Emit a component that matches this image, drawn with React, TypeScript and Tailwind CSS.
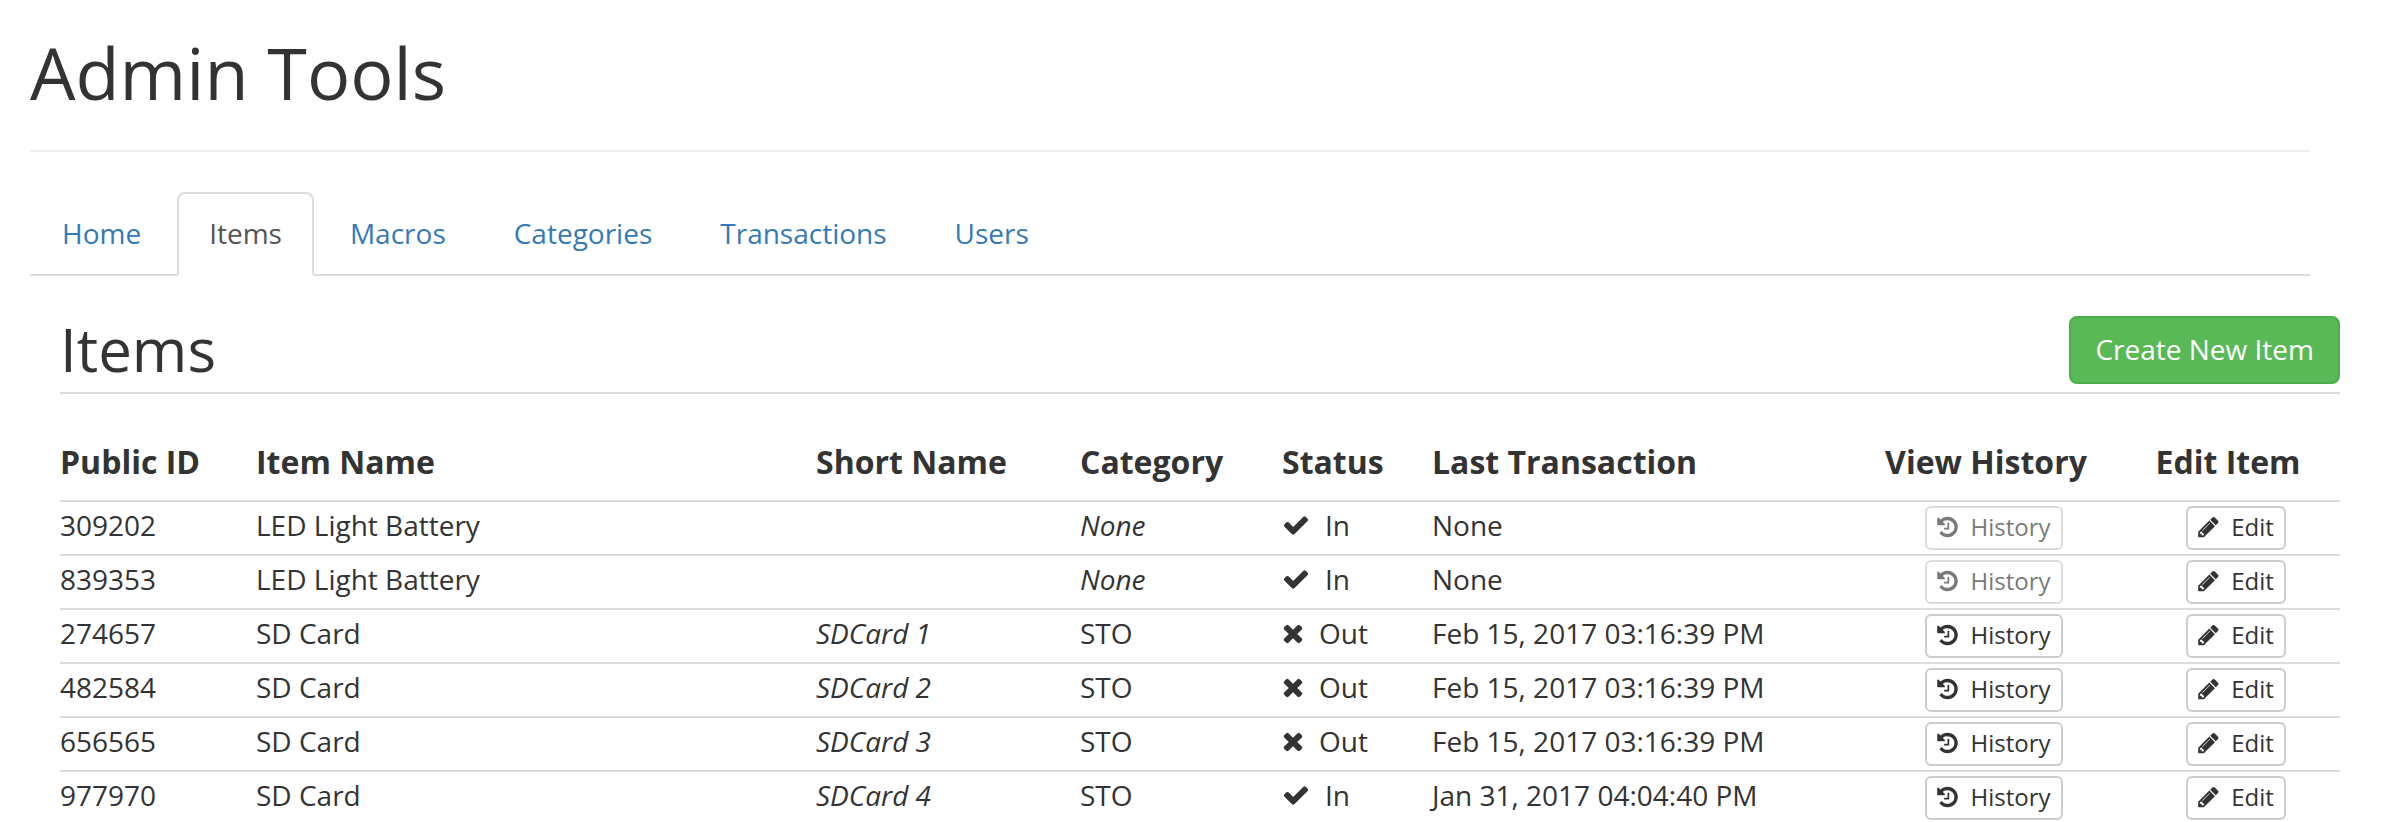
import type { ReactNode } from "react";

type Item = {
  id: string;
  name: string;
  shortName: string;
  category: string | null;
  status: "In" | "Out";
  lastTransaction: string | null;
};

const tabs = ["Home", "Items", "Macros", "Categories", "Transactions", "Users"];
const activeTab = "Items";

const items: Item[] = [
  { id: "309202", name: "LED Light Battery", shortName: "", category: null, status: "In", lastTransaction: null },
  { id: "839353", name: "LED Light Battery", shortName: "", category: null, status: "In", lastTransaction: null },
  { id: "274657", name: "SD Card", shortName: "SDCard 1", category: "STO", status: "Out", lastTransaction: "Feb 15, 2017 03:16:39 PM" },
  { id: "482584", name: "SD Card", shortName: "SDCard 2", category: "STO", status: "Out", lastTransaction: "Feb 15, 2017 03:16:39 PM" },
  { id: "656565", name: "SD Card", shortName: "SDCard 3", category: "STO", status: "Out", lastTransaction: "Feb 15, 2017 03:16:39 PM" },
  { id: "977970", name: "SD Card", shortName: "SDCard 4", category: "STO", status: "In", lastTransaction: "Jan 31, 2017 04:04:40 PM" },
];

function CheckIcon() {
  return (
    <svg viewBox="0 0 1792 1792" className="h-7 w-7 shrink-0" fill="currentColor" aria-hidden="true">
      <path d="M1671 566q0 40-28 68l-724 724-136 136q-28 28-68 28t-68-28l-136-136-362-362q-28-28-28-68t28-68l136-136q28-28 68-28t68 28l294 295 656-657q28-28 68-28t68 28l136 136q28 28 28 68z" />
    </svg>
  );
}

function TimesIcon() {
  return (
    <svg viewBox="192 0 1408 1792" className="h-7 w-[22px] shrink-0" fill="currentColor" aria-hidden="true">
      <path d="M1490 1322q0 40-28 68l-136 136q-28 28-68 28t-68-28l-294-294-294 294q-28 28-68 28t-68-28l-136-136q-28-28-28-68t28-68l294-294-294-294q-28-28-28-68t28-68l136-136q28-28 68-28t68 28l294 294 294-294q28-28 68-28t68 28l136 136q28 28 28 68t-28 68l-294 294 294 294q28 28 28 68z" />
    </svg>
  );
}

function HistoryIcon() {
  return (
    <svg viewBox="128 0 1536 1792" className="h-6 w-[21px] shrink-0" fill="currentColor" aria-hidden="true">
      <path d="M1664 896q0 156-61 298t-164 245-245 164-298 61q-172 0-327-72.5t-264-204.5q-7-10-6.5-22.5t8.5-20.5l137-138q10-9 25-9 16 2 23 12 73 95 179 147t225 52q104 0 198.5-40.5t163.5-109.5 109.5-163.5 40.5-198.5-40.5-198.5-109.5-163.5-163.5-109.5-198.5-40.5q-98 0-188 35.5t-160 101.5l137 138q31 30 14 69-17 40-59 40h-448q-26 0-45-19t-19-45v-448q0-42 40-59 39-17 69 14l130 129q107-101 244.5-156.5t284.5-55.5q156 0 298 61t245 164 164 245 61 298zm-640-288v448q0 14-9 23t-23 9h-320q-14 0-23-9t-9-23v-64q0-14 9-23t23-9h224v-352q0-14 9-23t23-9h64q14 0 23 9t9 23z" />
    </svg>
  );
}

function PencilIcon() {
  return (
    <svg viewBox="128 0 1536 1792" className="h-6 w-[21px] shrink-0" fill="currentColor" aria-hidden="true">
      <path d="M491 1536l91-91-235-235-91 91v107h128v128h107zm523-928q0-22-22-22-10 0-17 7l-542 542q-7 7-7 17 0 22 22 22 10 0 17-7l542-542q7-7 7-17zm-54-192l416 416-832 832h-416v-416zm683 96q0 53-37 90l-166 166-416-416 166-165q36-38 90-38 53 0 91 38l235 234q37 39 37 91z" />
    </svg>
  );
}

function SmallButton({ icon, label, disabled }: { icon: ReactNode; label: string; disabled?: boolean }) {
  return (
    <button
      type="button"
      disabled={disabled}
      className="inline-flex h-11 items-center gap-3 rounded-md border-2 border-[#ccc] bg-white px-[10px] pb-[2px] align-top text-2xl leading-[34px] text-[#333] disabled:opacity-65"
    >
      {icon}
      {label}
    </button>
  );
}

export default function App() {
  return (
    <div className="bg-white font-['Open_Sans',sans-serif] text-[28px] leading-[38px] text-[#333]">
      <header className="pr-[82px] pl-[30px] pt-8">
        <h1 className="border-b-2 border-[#eee] pb-[38px] text-7xl leading-[80px]">Admin Tools</h1>
        <nav className="mt-10 border-b-2 border-[#ddd]">
          <ul className="-mb-[2px] flex gap-1">
            {tabs.map((tab) => (
              <li key={tab}>
                <a
                  href={`#${tab.toLowerCase()}`}
                  aria-current={tab === activeTab ? "page" : undefined}
                  className={
                    tab === activeTab
                      ? "block rounded-t-lg border-2 border-[#ddd] border-b-white bg-white px-[30px] pt-5 pb-[22px] text-[#555]"
                      : "block rounded-t-lg border-2 border-transparent px-[30px] pt-5 pb-[22px] text-[#337ab7]"
                  }
                >
                  {tab}
                </a>
              </li>
            ))}
          </ul>
        </nav>
      </header>

      <main className="pr-[52px] pl-[60px] pt-10">
        <div className="flex items-start justify-between border-b-2 border-[#ddd] pb-2">
          <h2 className="text-6xl leading-[66px]">Items</h2>
          <button
            type="button"
            className="rounded-lg border-2 border-[#4cae4c] bg-[#5ab957] px-6 pt-3 pb-[14px] text-white"
          >
            Create New Item
          </button>
        </div>

        <table className="mt-[30px] w-full table-fixed text-left">
          <colgroup>
            <col className="w-[196px]" />
            <col />
            <col className="w-[264px]" />
            <col className="w-[202px]" />
            <col className="w-[150px]" />
            <col className="w-[424px]" />
            <col className="w-[260px]" />
            <col className="w-[224px]" />
          </colgroup>
          <thead>
            <tr className="text-[32px] leading-[44px] [&>th]:pt-4 [&>th]:pb-4">
              <th>Public ID</th>
              <th>Item Name</th>
              <th>Short Name</th>
              <th>Category</th>
              <th>Status</th>
              <th>Last Transaction</th>
              <th className="text-center">View History</th>
              <th className="text-center">Edit Item</th>
            </tr>
          </thead>
          <tbody>
            {items.map((item) => (
              <tr
                key={item.id}
                className="border-t-2 border-[#ddd] [&>td]:pt-1 [&>td]:pb-1 [&>td]:align-top last:[&>td]:pb-0"
              >
                <td>{item.id}</td>
                <td>{item.name}</td>
                <td className="italic">{item.shortName}</td>
                <td>{item.category ?? <em>None</em>}</td>
                <td>
                  <span className="flex items-center gap-[15px]">
                    {item.status === "In" ? <CheckIcon /> : <TimesIcon />}
                    {item.status}
                  </span>
                </td>
                <td>{item.lastTransaction ?? "None"}</td>
                <td className="pl-4 text-center">
                  <SmallButton icon={<HistoryIcon />} label="History" disabled={item.lastTransaction === null} />
                </td>
                <td className="pl-4 text-center">
                  <SmallButton icon={<PencilIcon />} label="Edit" />
                </td>
              </tr>
            ))}
          </tbody>
        </table>
      </main>
    </div>
  );
}
